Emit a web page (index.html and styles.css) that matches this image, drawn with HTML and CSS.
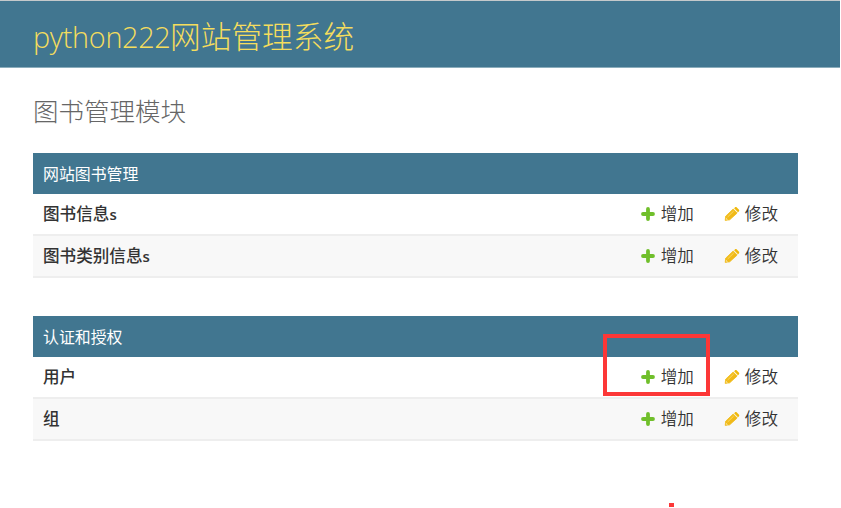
FILE: index.html
```html
<!DOCTYPE html>
<html lang="zh-CN">
<head>
<meta charset="utf-8">
<title>python222网站管理系统</title>
<link rel="stylesheet" href="styles.css">
</head>
<body>
<svg width="0" height="0" class="defs">
  <defs>
    <linearGradient id="gold" x1="0" y1="0" x2="1" y2="1"><stop offset="0" stop-color="#f6c62a"/><stop offset="1" stop-color="#ecb00c"/></linearGradient>
    <symbol id="add" viewBox="0 0 14 14"><path d="M7 2v10M2 7h10" stroke="#70bf2b" stroke-width="3.8" stroke-linecap="round"/></symbol>
    <symbol id="edit" viewBox="0 0 16 16"><path d="M1.2 14.4 1.7 10.2 9.2 3l4 4-7.5 6.8z" fill="url(#gold)" stroke="#f0bb18" stroke-width=".8" stroke-linejoin="round"/><path d="m10.1 2.3.8-.8c.6-.6 1.3-.6 1.9 0l2 2c.6.6.6 1.3 0 1.9l-.8.8z" fill="#efb80b"/><path d="M3.7 10.9 9.7 5.1" stroke="#fbdc74" stroke-width=".8"/><path d="m2 12.5 1.6 1.5" stroke="#fff" stroke-width=".8"/></symbol>
  </defs>
</svg>
<header class="header"><h1 class="brand"><span class="brand-latin">python222</span><span>网站管理系统</span></h1></header>
<main class="content">
  <h2 class="title">图书管理模块</h2>
  <section class="module">
    <h3 class="caption">网站图书管理</h3>
    <div class="row"><b class="name">图书信息<span class="suffix">s</span></b><a class="action"><svg class="add"><use href="#add"/></svg>增加</a><a class="action"><svg class="edit"><use href="#edit"/></svg>修改</a></div>
    <div class="row alt"><b class="name">图书类别信息<span class="suffix">s</span></b><a class="action"><svg class="add"><use href="#add"/></svg>增加</a><a class="action"><svg class="edit"><use href="#edit"/></svg>修改</a></div>
  </section>
  <section class="module">
    <h3 class="caption">认证和授权</h3>
    <div class="row"><b class="name">用户</b><a class="action"><svg class="add"><use href="#add"/></svg>增加</a><a class="action"><svg class="edit"><use href="#edit"/></svg>修改</a></div>
    <div class="row alt"><b class="name">组</b><a class="action"><svg class="add"><use href="#add"/></svg>增加</a><a class="action"><svg class="edit"><use href="#edit"/></svg>修改</a></div>
  </section>
</main>
<div class="highlight"></div>
<div class="mark"></div>
</body>
</html>
```
FILE: styles.css
```css
* { box-sizing: border-box; }
body {
  margin: 0;
  height: 508px;
  overflow: hidden;
  position: relative;
  background: #fff;
  color: #333;
  font-family: "Open Sans", "Noto Sans CJK SC", sans-serif;
}
h1, h2, h3 { margin: 0; font-weight: 300; }
.defs { position: absolute; }
.header {
  width: 840px;
  height: 68px;
  padding: 5px 0 0 33px;
  display: flex;
  align-items: center;
  background: #417690;
  border-top: 1px solid #c5c9cb;
  border-bottom: 1px solid #8badbc;
}
.brand {
  display: flex;
  align-items: baseline;
  color: #f5dd5d;
  font-size: 30.7px;
  line-height: 44px;
}
.brand-latin { width: 137px; font-size: 28.8px; letter-spacing: -.3px; }
.content { width: 798px; padding: 24px 0 0 33px; }
.title {
  height: 38px;
  margin-bottom: 23px;
  color: #666;
  font-size: 25.5px;
  line-height: 38px;
}
.module { margin-bottom: 38px; }
.caption {
  height: 41px;
  padding-left: 10px;
  background: #417690;
  color: #fff;
  font-size: 15.9px;
  font-weight: 400;
  line-height: 42px;
}
.row {
  height: 42px;
  padding: 0 20px 0 10px;
  display: flex;
  align-items: center;
  border-bottom: 2px solid #eee;
  font-size: 16.6px;
  line-height: 40px;
}
.alt { background: #f8f8f8; }
.name { flex: 1; font-weight: 500; }
.suffix { font-weight: 600; font-size: 15px; }
.action { display: flex; align-items: center; margin-left: 30px; font-weight: 350; }
.add { width: 14px; height: 14px; margin-right: 6px; }
.edit { width: 16px; height: 16px; margin-right: 5px; }
.highlight {
  position: absolute;
  left: 603px;
  top: 334px;
  width: 107px;
  height: 62px;
  border: 4px solid #fc3737;
}
.mark {
  position: absolute;
  left: 669px;
  top: 503px;
  width: 5px;
  height: 4px;
  background: #fc3737;
}
```
